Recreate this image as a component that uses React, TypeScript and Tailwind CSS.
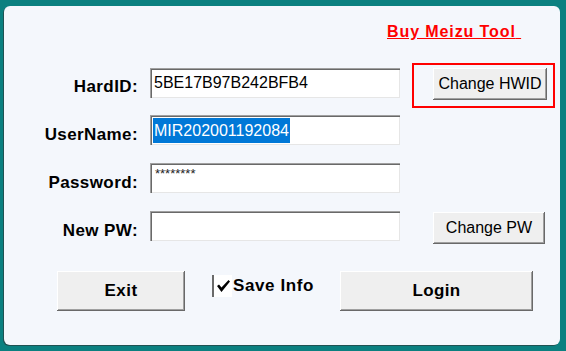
import React from 'react';

const btn =
  'flex items-center justify-center bg-[#efefef] text-[#000] shadow-[inset_-1px_-1px_0_#696969,inset_1px_1px_0_#ffffff,inset_-2px_-2px_0_#a0a0a0]';
const field =
  'w-[250px] h-[30px] bg-white flex items-center shadow-[inset_1px_1px_0_#a0a0a0,inset_2px_2px_0_#696969,inset_-1px_-1px_0_#e6e6e6]';
const label =
  'w-[134px] text-right text-[17px] leading-[20px] font-bold tracking-[0.4px] text-[#000]';

const App: React.FC = () => {
  return (
    <div
      className="w-[566px] h-[351px] bg-[#0b8080] pt-[6px] pl-[4px] pr-[6px] pb-[6px]"
      style={{ fontFamily: '"Liberation Sans", Arial, sans-serif' }}
    >
      <div className="h-[339px] bg-[#f4f7fc] rounded-[6px] shadow-[-1px_1px_0_#1f5252] flex flex-col">
        {/* link */}
        <div className="mt-[14px] ml-[383px] h-[20px]">
          <a href="#" className="text-[16px] leading-[20px] font-bold tracking-[0.9px] text-[#ff0000] underline whitespace-pre">
            Buy Meizu Tool{' '}
          </a>
        </div>

        {/* HardID */}
        <div className="mt-[23px] flex items-start h-[45px]">
          <div className={`${label} mt-[14px]`}>HardID:</div>
          <div className={`${field} ml-[12px] mt-[5px] pl-[4px] text-[16px]`}>5BE17B97B242BFB4</div>
          <div className="ml-[12px] w-[143px] h-[45px] border-2 border-[#ff0000] pl-[19px] pt-[3px]">
            <button className={`${btn} w-[114px] h-[32px] text-[16px]`}>Change HWID</button>
          </div>
        </div>

        {/* UserName */}
        <div className="mt-[7px] flex items-start h-[30px]">
          <div className={`${label} mt-[10px]`}>UserName:</div>
          <div className={`${field} ml-[12px] pl-[3px] text-[16px]`}>
            <span className="bg-[#0078d7] text-white leading-[25px] pl-[1px] pr-[1px]">MIR202001192084</span>
          </div>
        </div>

        {/* Password */}
        <div className="mt-[18px] flex items-start h-[30px]">
          <div className={`${label} mt-[10px]`}>Password:</div>
          <div className={`${field} ml-[12px] pl-[5px] !items-start pt-[4px] text-[13px] leading-[14px] text-[#222]`}>
            ********
          </div>
        </div>

        {/* New PW */}
        <div className="mt-[18px] flex items-start h-[33px]">
          <div className={`${label} mt-[10px]`}>New PW:</div>
          <div className={`${field} ml-[12px]`} />
          <button className={`${btn} ml-[33px] mt-[1px] w-[112px] h-[32px] text-[16px]`}>Change PW</button>
        </div>

        {/* actions */}
        <div className="mt-[27px] flex items-start h-[40px] pl-[53px]">
          <button className={`${btn} w-[128px] h-[40px] text-[17px] font-bold tracking-[0.5px]`}>Exit</button>
          <label className="ml-[27px] w-[128px] mt-[4px] h-[22px] flex items-center">
            <span className="w-[20px] h-[22px] bg-white border-l-2 border-[#6a6a6a] flex items-center justify-center">
              <svg width="15" height="14" viewBox="0 0 15 14">
                <path d="M1 7 L3 5.5 L5.5 8.5 L12.5 1 L14 2.5 L5.5 13 Z" fill="#000" />
              </svg>
            </span>
            <span className="ml-[1px] text-[17px] leading-[20px] font-bold tracking-[0.6px] text-[#000]">Save Info</span>
          </label>
          <button className={`${btn} w-[193px] h-[40px] text-[17px] font-bold tracking-[0.3px]`}>Login</button>
        </div>
      </div>
    </div>
  );
};

export default App;
